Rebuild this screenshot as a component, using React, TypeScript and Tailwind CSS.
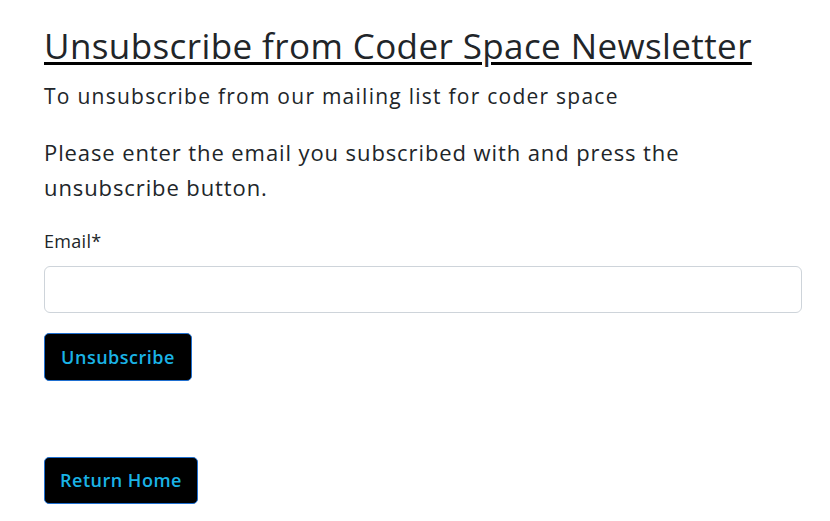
export default function App() {
  return (
    <div className="min-h-screen bg-white text-[#212529] font-['Open_Sans',sans-serif]">
      <div className="pl-[44px] pr-[28px] pt-[24px]">
        <h1 className="text-[35px] leading-[44px] tracking-[0.4px] underline decoration-black decoration-[3px] underline-offset-[3px]">
          Unsubscribe from Coder Space Newsletter
        </h1>
        <p className="mt-[12px] text-[21px] leading-[32px] tracking-[1.25px]">To unsubscribe from our mailing list for coder space</p>
        <p className="mt-[23px] text-[22px] leading-[35px] tracking-[0.9px] max-w-[700px]">
          Please enter the email you subscribed with and press the unsubscribe button.
        </p>
        <form className="mt-[24px] flex flex-col" onSubmit={(e) => e.preventDefault()}>
          <label className="text-[18px] leading-[24px] tracking-[0.3px]">Email*</label>
          <input
            type="email"
            className="mt-[13px] h-[47px] w-full rounded-[6px] border border-[#ced4da] bg-white px-3"
          />
          <div className="mt-[20px]">
            <button className="h-[48px] w-[148px] rounded-[5px] border border-[#1f6fd0] bg-black text-[18px] font-semibold tracking-[0.5px] text-[#1ab3e6]">
              Unsubscribe
            </button>
          </div>
        </form>
        <div className="mt-[76px]">
          <button className="h-[47px] w-[154px] rounded-[5px] border border-[#1f6fd0] bg-black text-[18px] font-semibold tracking-[0.5px] text-[#1ab3e6]">
            Return Home
          </button>
        </div>
      </div>
    </div>
  )
}
